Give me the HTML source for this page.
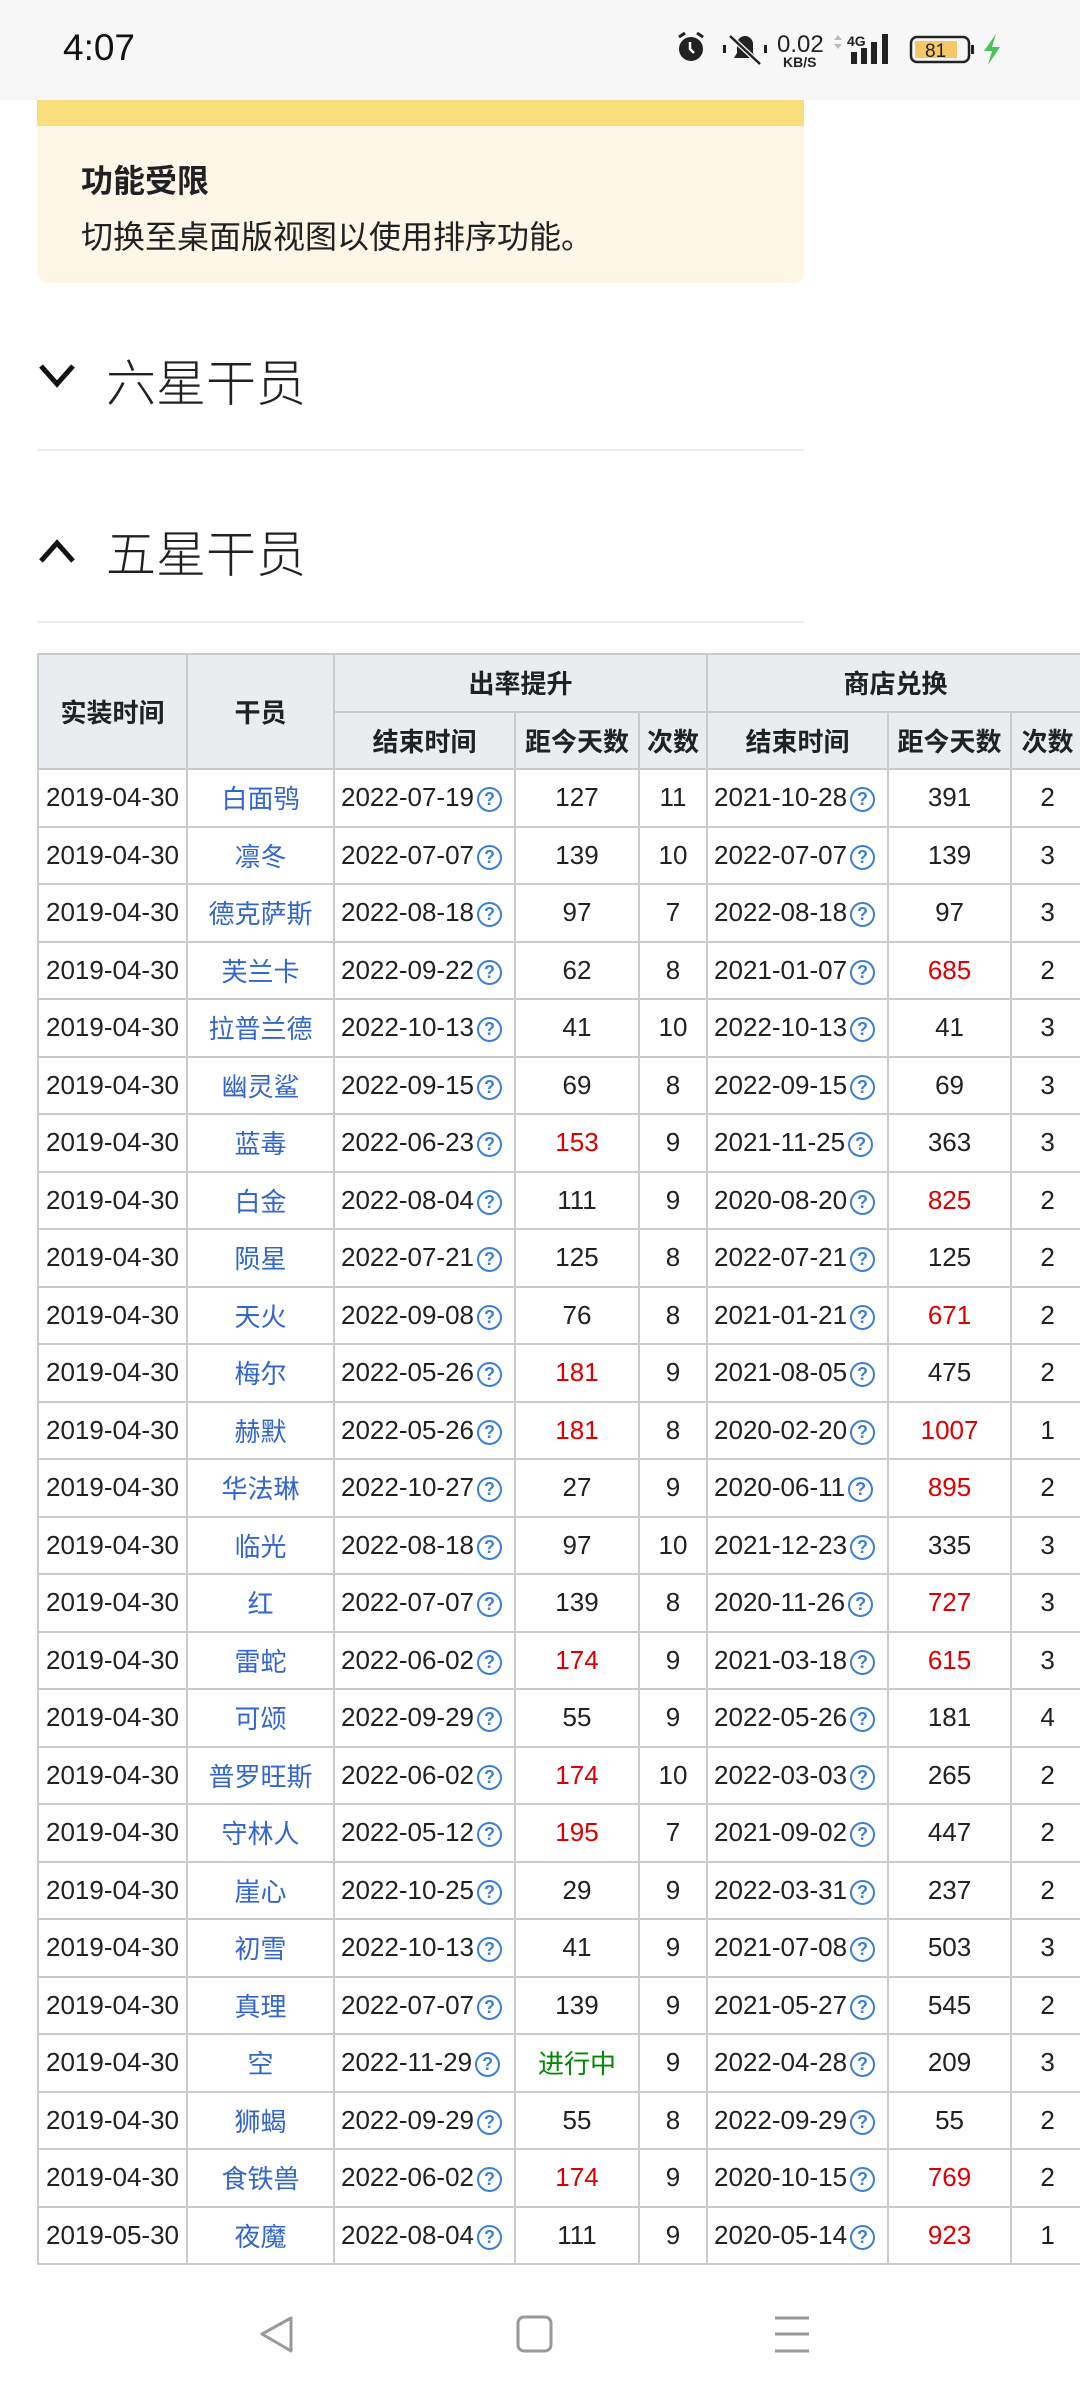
<!DOCTYPE html>
<html><head><meta charset="utf-8"><style>
*{margin:0;padding:0;box-sizing:border-box}
body{width:1080px;height:2400px;background:#fff;position:relative;overflow:hidden;font-family:"Liberation Sans","Noto Sans CJK SC",sans-serif;color:#202122}
.abs{position:absolute}
#sb{left:0;top:0;width:1080px;height:100px;background:#f7f7f7}
table{position:absolute;left:37px;top:653px;border-collapse:collapse;table-layout:fixed;width:1046px}
td,th{border:2px solid #c8ccd1;font-size:26px;text-align:center;height:57.5px;padding:0;white-space:nowrap;overflow:hidden}
th{background:#eaecf0;font-weight:bold;height:57.5px}
td.d{text-align:left;padding-left:6px}
a{color:#3366cc;text-decoration:none}
.r{color:#d00}
.g{color:#080}
.q{display:inline-block;width:25px;height:25px;border:2px solid #3b7fd4;border-radius:50%;color:#3b7fd4;font-size:18px;line-height:21px;text-align:center;font-weight:bold;vertical-align:1px;margin-left:3px}
.h{font-size:50px;font-family:"Noto Sans CJK SC",sans-serif;font-weight:300}
</style></head><body>
<div id="sb" class="abs"></div>
<div class="abs" style="left:63px;top:27px;font-size:37px;color:#111">4:07</div>
<svg class="abs" style="left:672px;top:30px" width="340" height="40" viewBox="672 30 340 40">
<circle cx="691" cy="49" r="12" fill="#222"/><path d="M679 37l6-4M703 37l-6-4" stroke="#222" stroke-width="3"/><path d="M690 42v7l4 4" stroke="#fff" stroke-width="2.5" fill="none"/>
<path d="M734 58h22l-3-5v-9a8 8 0 0 0-16 0v9z" fill="#222"/><path d="M730 36l30 28" stroke="#f7f7f7" stroke-width="5"/><path d="M730 36l30 28" stroke="#222" stroke-width="2.5"/><rect x="723" y="45" width="3" height="8" fill="#222"/><rect x="764" y="45" width="3" height="8" fill="#222"/>
<text x="777" y="52" font-size="24" font-family="Liberation Sans" fill="#222">0.02</text>
<text x="783" y="67" font-size="14" font-weight="bold" font-family="Liberation Sans" fill="#222">KB/S</text>
<path d="M834 40l4-5 4 5zM834 44l4 5 4-5z" fill="#bbb"/>
<text x="847" y="46" font-size="14" font-weight="bold" font-family="Liberation Sans" fill="#222">4G</text>
<rect x="851" y="52" width="6" height="12" fill="#222"/><rect x="861" y="48" width="6" height="16" fill="#222"/><rect x="871" y="42" width="6" height="22" fill="#222"/><rect x="882" y="34" width="6" height="30" fill="#222"/>
<rect x="911" y="37" width="58" height="25" rx="6" fill="none" stroke="#222" stroke-width="2.5"/><rect x="915" y="41" width="42" height="17" fill="#f5c865"/><rect x="971" y="45" width="3" height="9" fill="#222"/>
<text x="925" y="57" font-size="19" font-family="Liberation Sans" fill="#222">81</text>
<path d="M996 34l-12 17h8l-4 14 12-18h-8z" fill="#4cc15a"/>
</svg>
<div class="abs" style="left:37px;top:100px;width:767px;height:183px;background:#fef6e7;border-radius:0 0 10px 10px;overflow:hidden"><div style="height:26px;background:#f8df7c"></div></div>
<div class="abs" style="left:81px;top:156px;font-size:32px;font-weight:bold">功能受限</div>
<div class="abs" style="left:81px;top:212px;font-size:32px">切换至桌面版视图以使用排序功能。</div>
<svg class="abs" style="left:37px;top:362px" width="42" height="30"><path d="M4 4l16 18 16-18" stroke="#111" stroke-width="5" fill="none"/></svg>
<div class="abs h" style="left:106px;top:344px">六星干员</div>
<div class="abs" style="left:37px;top:449px;width:767px;height:2px;background:#eaecf0"></div>
<svg class="abs" style="left:37px;top:535px" width="42" height="30"><path d="M4 26l16-18 16 18" stroke="#111" stroke-width="5" fill="none"/></svg>
<div class="abs h" style="left:106px;top:515px">五星干员</div>
<div class="abs" style="left:37px;top:621px;width:767px;height:2px;background:#eaecf0"></div>
<table>
<colgroup><col style="width:149px"><col style="width:147px"><col style="width:181px"><col style="width:124px"><col style="width:68px"><col style="width:181px"><col style="width:123px"><col style="width:73px"></colgroup>
<tr><th rowspan="2">实装时间</th><th rowspan="2">干员</th><th colspan="3">出率提升</th><th colspan="3">商店兑换</th></tr>
<tr><th>结束时间</th><th>距今天数</th><th>次数</th><th>结束时间</th><th>距今天数</th><th>次数</th></tr>
<tr><td>2019-04-30</td><td><a>白面鸮</a></td><td class="d">2022-07-19<span class="q">?</span></td><td>127</td><td>11</td><td class="d">2021-10-28<span class="q">?</span></td><td>391</td><td>2</td></tr>
<tr><td>2019-04-30</td><td><a>凛冬</a></td><td class="d">2022-07-07<span class="q">?</span></td><td>139</td><td>10</td><td class="d">2022-07-07<span class="q">?</span></td><td>139</td><td>3</td></tr>
<tr><td>2019-04-30</td><td><a>德克萨斯</a></td><td class="d">2022-08-18<span class="q">?</span></td><td>97</td><td>7</td><td class="d">2022-08-18<span class="q">?</span></td><td>97</td><td>3</td></tr>
<tr><td>2019-04-30</td><td><a>芙兰卡</a></td><td class="d">2022-09-22<span class="q">?</span></td><td>62</td><td>8</td><td class="d">2021-01-07<span class="q">?</span></td><td class="r">685</td><td>2</td></tr>
<tr><td>2019-04-30</td><td><a>拉普兰德</a></td><td class="d">2022-10-13<span class="q">?</span></td><td>41</td><td>10</td><td class="d">2022-10-13<span class="q">?</span></td><td>41</td><td>3</td></tr>
<tr><td>2019-04-30</td><td><a>幽灵鲨</a></td><td class="d">2022-09-15<span class="q">?</span></td><td>69</td><td>8</td><td class="d">2022-09-15<span class="q">?</span></td><td>69</td><td>3</td></tr>
<tr><td>2019-04-30</td><td><a>蓝毒</a></td><td class="d">2022-06-23<span class="q">?</span></td><td class="r">153</td><td>9</td><td class="d">2021-11-25<span class="q">?</span></td><td>363</td><td>3</td></tr>
<tr><td>2019-04-30</td><td><a>白金</a></td><td class="d">2022-08-04<span class="q">?</span></td><td>111</td><td>9</td><td class="d">2020-08-20<span class="q">?</span></td><td class="r">825</td><td>2</td></tr>
<tr><td>2019-04-30</td><td><a>陨星</a></td><td class="d">2022-07-21<span class="q">?</span></td><td>125</td><td>8</td><td class="d">2022-07-21<span class="q">?</span></td><td>125</td><td>2</td></tr>
<tr><td>2019-04-30</td><td><a>天火</a></td><td class="d">2022-09-08<span class="q">?</span></td><td>76</td><td>8</td><td class="d">2021-01-21<span class="q">?</span></td><td class="r">671</td><td>2</td></tr>
<tr><td>2019-04-30</td><td><a>梅尔</a></td><td class="d">2022-05-26<span class="q">?</span></td><td class="r">181</td><td>9</td><td class="d">2021-08-05<span class="q">?</span></td><td>475</td><td>2</td></tr>
<tr><td>2019-04-30</td><td><a>赫默</a></td><td class="d">2022-05-26<span class="q">?</span></td><td class="r">181</td><td>8</td><td class="d">2020-02-20<span class="q">?</span></td><td class="r">1007</td><td>1</td></tr>
<tr><td>2019-04-30</td><td><a>华法琳</a></td><td class="d">2022-10-27<span class="q">?</span></td><td>27</td><td>9</td><td class="d">2020-06-11<span class="q">?</span></td><td class="r">895</td><td>2</td></tr>
<tr><td>2019-04-30</td><td><a>临光</a></td><td class="d">2022-08-18<span class="q">?</span></td><td>97</td><td>10</td><td class="d">2021-12-23<span class="q">?</span></td><td>335</td><td>3</td></tr>
<tr><td>2019-04-30</td><td><a>红</a></td><td class="d">2022-07-07<span class="q">?</span></td><td>139</td><td>8</td><td class="d">2020-11-26<span class="q">?</span></td><td class="r">727</td><td>3</td></tr>
<tr><td>2019-04-30</td><td><a>雷蛇</a></td><td class="d">2022-06-02<span class="q">?</span></td><td class="r">174</td><td>9</td><td class="d">2021-03-18<span class="q">?</span></td><td class="r">615</td><td>3</td></tr>
<tr><td>2019-04-30</td><td><a>可颂</a></td><td class="d">2022-09-29<span class="q">?</span></td><td>55</td><td>9</td><td class="d">2022-05-26<span class="q">?</span></td><td>181</td><td>4</td></tr>
<tr><td>2019-04-30</td><td><a>普罗旺斯</a></td><td class="d">2022-06-02<span class="q">?</span></td><td class="r">174</td><td>10</td><td class="d">2022-03-03<span class="q">?</span></td><td>265</td><td>2</td></tr>
<tr><td>2019-04-30</td><td><a>守林人</a></td><td class="d">2022-05-12<span class="q">?</span></td><td class="r">195</td><td>7</td><td class="d">2021-09-02<span class="q">?</span></td><td>447</td><td>2</td></tr>
<tr><td>2019-04-30</td><td><a>崖心</a></td><td class="d">2022-10-25<span class="q">?</span></td><td>29</td><td>9</td><td class="d">2022-03-31<span class="q">?</span></td><td>237</td><td>2</td></tr>
<tr><td>2019-04-30</td><td><a>初雪</a></td><td class="d">2022-10-13<span class="q">?</span></td><td>41</td><td>9</td><td class="d">2021-07-08<span class="q">?</span></td><td>503</td><td>3</td></tr>
<tr><td>2019-04-30</td><td><a>真理</a></td><td class="d">2022-07-07<span class="q">?</span></td><td>139</td><td>9</td><td class="d">2021-05-27<span class="q">?</span></td><td>545</td><td>2</td></tr>
<tr><td>2019-04-30</td><td><a>空</a></td><td class="d">2022-11-29<span class="q">?</span></td><td class="g">进行中</td><td>9</td><td class="d">2022-04-28<span class="q">?</span></td><td>209</td><td>3</td></tr>
<tr><td>2019-04-30</td><td><a>狮蝎</a></td><td class="d">2022-09-29<span class="q">?</span></td><td>55</td><td>8</td><td class="d">2022-09-29<span class="q">?</span></td><td>55</td><td>2</td></tr>
<tr><td>2019-04-30</td><td><a>食铁兽</a></td><td class="d">2022-06-02<span class="q">?</span></td><td class="r">174</td><td>9</td><td class="d">2020-10-15<span class="q">?</span></td><td class="r">769</td><td>2</td></tr>
<tr><td>2019-05-30</td><td><a>夜魔</a></td><td class="d">2022-08-04<span class="q">?</span></td><td>111</td><td>9</td><td class="d">2020-05-14<span class="q">?</span></td><td class="r">923</td><td>1</td></tr>
</table>
<div class="abs" style="left:0;top:2266px;width:1080px;height:134px;background:#fff"></div>
<svg class="abs" style="left:0;top:2300px" width="1080" height="70">
<path d="M291 18L262 34l29 17z" fill="none" stroke="#999" stroke-width="3" stroke-linejoin="round"/>
<rect x="518" y="17" width="33" height="34" rx="6" fill="none" stroke="#999" stroke-width="3"/>
<path d="M775 18h34M775 34h34M775 51h34" stroke="#999" stroke-width="3"/>
</svg>
</body></html>
